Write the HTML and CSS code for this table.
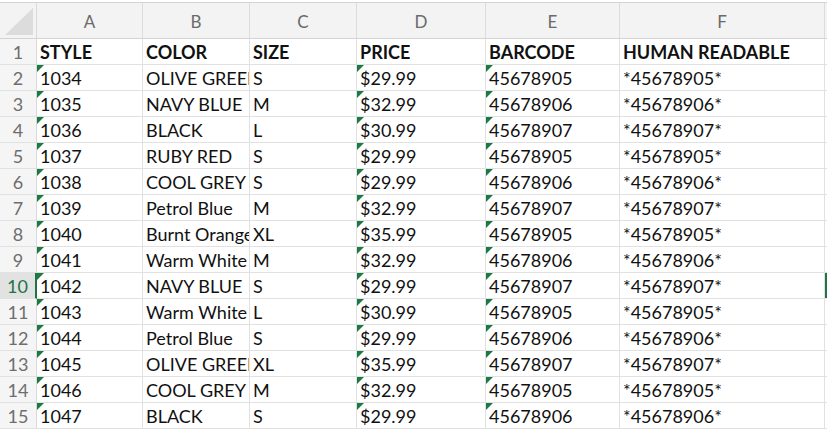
FILE: index.html
```
<!DOCTYPE html>
<html>
<head>
<meta charset="utf-8">
<link rel="stylesheet" href="styles.css">
</head>
<body>
<div class="topbar"></div>
<div class="sheet">
  <div class="corner"><svg width="36" height="35" viewBox="0 0 36 35"><polygon points="5,32 33,32 33,5" fill="#dcdcdc"/></svg></div>
  <div class="ch">A</div><div class="ch">B</div><div class="ch">C</div><div class="ch">D</div><div class="ch">E</div><div class="ch">F</div><div class="ch gcol"></div>

  <div class="rh">1</div><div class="c b">STYLE</div><div class="c b">COLOR</div><div class="c b">SIZE</div><div class="c b">PRICE</div><div class="c b">BARCODE</div><div class="c b">HUMAN READABLE</div><div class="c g"></div>

  <div class="rh">2</div><div class="c t">1034</div><div class="c">OLIVE GREEN</div><div class="c">S</div><div class="c t">$29.99</div><div class="c t">45678905</div><div class="c">*45678905*</div><div class="c g"></div>
  <div class="rh">3</div><div class="c t">1035</div><div class="c">NAVY BLUE</div><div class="c">M</div><div class="c t">$32.99</div><div class="c t">45678906</div><div class="c">*45678906*</div><div class="c g"></div>
  <div class="rh">4</div><div class="c t">1036</div><div class="c">BLACK</div><div class="c">L</div><div class="c t">$30.99</div><div class="c t">45678907</div><div class="c">*45678907*</div><div class="c g"></div>
  <div class="rh">5</div><div class="c t">1037</div><div class="c">RUBY RED</div><div class="c">S</div><div class="c t">$29.99</div><div class="c t">45678905</div><div class="c">*45678905*</div><div class="c g"></div>
  <div class="rh">6</div><div class="c t">1038</div><div class="c">COOL GREY</div><div class="c">S</div><div class="c t">$29.99</div><div class="c t">45678906</div><div class="c">*45678906*</div><div class="c g"></div>
  <div class="rh">7</div><div class="c t">1039</div><div class="c">Petrol Blue</div><div class="c">M</div><div class="c t">$32.99</div><div class="c t">45678907</div><div class="c">*45678907*</div><div class="c g"></div>
  <div class="rh">8</div><div class="c t">1040</div><div class="c">Burnt Orange</div><div class="c">XL</div><div class="c t">$35.99</div><div class="c t">45678905</div><div class="c">*45678905*</div><div class="c g"></div>
  <div class="rh">9</div><div class="c t">1041</div><div class="c">Warm White</div><div class="c">M</div><div class="c t">$32.99</div><div class="c t">45678906</div><div class="c">*45678906*</div><div class="c g"></div>
  <div class="rh sel">10</div><div class="c t">1042</div><div class="c">NAVY BLUE</div><div class="c">S</div><div class="c t">$29.99</div><div class="c t">45678907</div><div class="c">*45678907*</div><div class="c g active"></div>
  <div class="rh">11</div><div class="c t">1043</div><div class="c">Warm White</div><div class="c">L</div><div class="c t">$30.99</div><div class="c t">45678905</div><div class="c">*45678905*</div><div class="c g"></div>
  <div class="rh">12</div><div class="c t">1044</div><div class="c">Petrol Blue</div><div class="c">S</div><div class="c t">$29.99</div><div class="c t">45678906</div><div class="c">*45678906*</div><div class="c g"></div>
  <div class="rh">13</div><div class="c t">1045</div><div class="c">OLIVE GREEN</div><div class="c">XL</div><div class="c t">$35.99</div><div class="c t">45678907</div><div class="c">*45678907*</div><div class="c g"></div>
  <div class="rh">14</div><div class="c t">1046</div><div class="c">COOL GREY</div><div class="c">M</div><div class="c t">$32.99</div><div class="c t">45678905</div><div class="c">*45678905*</div><div class="c g"></div>
  <div class="rh">15</div><div class="c t">1047</div><div class="c">BLACK</div><div class="c">S</div><div class="c t">$29.99</div><div class="c t">45678906</div><div class="c">*45678906*</div><div class="c g"></div>
</div>
</body>
</html>
```
FILE: styles.css
```
html, body {
  margin: 0;
  padding: 0;
  background: #ffffff;
}
body {
  font-family: Lato, "Open Sans", sans-serif;
  color: #111;
  overflow: hidden;
}
.topbar {
  height: 2px;
  background: #ffffff;
  border-bottom: 1px solid #d4d4d4;
}
.sheet {
  display: grid;
  grid-template-columns: 37px 106px 107px 107px 129px 134px 205px 1fr;
  grid-template-rows: 36px;
  grid-auto-rows: 26px;
}
.corner {
  background: #f3f3f3;
  border-right: 1px solid #d9d9d9;
  border-bottom: 1px solid #d3d3d3;
  display: flex;
  align-items: flex-start;
  justify-content: flex-start;
}
.corner svg {
  display: block;
}
.ch {
  background: #f3f3f3;
  border-right: 1px solid #dcdcdc;
  border-bottom: 1px solid #d3d3d3;
  color: #6a6a6a;
  font-size: 17px;
  padding-top: 2px;
  line-height: 33px;
  text-align: center;
}
.ch.gcol {
  border-right: none;
}
.rh {
  background: #f5f5f5;
  border-right: 1px solid #d9d9d9;
  border-bottom: 1px solid #e1e1e1;
  color: #6e6e6e;
  font-size: 18px;
  padding-top: 2px;
  line-height: 23px;
  text-align: center;
}
.rh.sel {
  background: #e2e2e2;
  color: #217346;
  border-right: 2px solid #217346;
}
.c {
  position: relative;
  border-right: 1px solid #e1e1e1;
  border-bottom: 1px solid #e1e1e1;
  font-size: 18px;
  padding-top: 2px;
  line-height: 23px;
  padding-left: 3px;
  white-space: nowrap;
  overflow: hidden;
}
.c.b {
  font-weight: 700;
  padding-left: 3px;
}
.c.t::before {
  content: "";
  position: absolute;
  left: 0;
  top: 0;
  width: 0;
  height: 0;
  border-top: 7px solid #1b7a42;
  border-right: 7px solid transparent;
}
.c.g {
  border-right: none;
  padding: 0;
}
.c.g.active {
  background: #217346;
}
```
